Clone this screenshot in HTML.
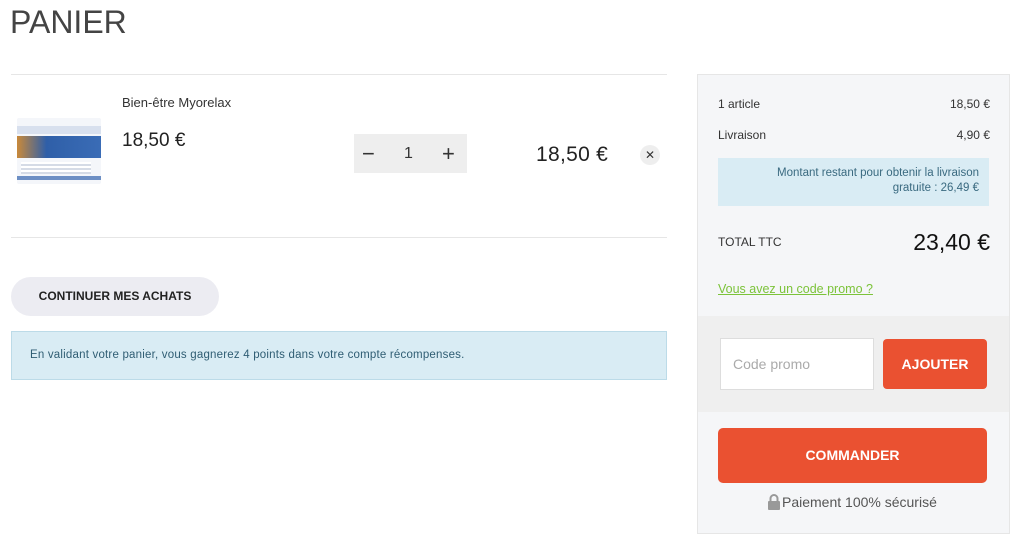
<!DOCTYPE html>
<html><head><meta charset="utf-8"><style>
*{box-sizing:border-box;margin:0;padding:0}
body{width:1022px;height:526px;background:#fff;font-family:"Liberation Sans",sans-serif;color:#222;position:relative;overflow:hidden}
.a{position:absolute}
</style></head><body>
<div class="a" style="left:10px;top:4px;font-size:32px;color:#444">PANIER</div>
<div class="a" style="left:11px;top:74px;width:656px;border-top:1px solid #e6e6e6"></div>
<div class="a" style="left:11px;top:237px;width:656px;border-top:1px solid #e6e6e6"></div>
<div class="a" style="left:17px;top:118px;width:84px;height:66px;background:#f4f6fa;border-radius:2px;overflow:hidden">
<div style="position:absolute;left:0;top:8px;width:84px;height:8px;background:#d8e0ee"></div>
<div style="position:absolute;left:0;top:18px;width:84px;height:22px;background:linear-gradient(90deg,#c9893a 0%,#2f5fa8 35%,#3a6cb6 100%)"></div>
<div style="position:absolute;left:4px;top:44px;width:70px;height:12px;background:repeating-linear-gradient(#fff 0 2px,#d5dbe6 2px 4px)"></div>
<div style="position:absolute;left:0;top:58px;width:84px;height:4px;background:#6d8fc4"></div>
</div>
<div class="a" style="left:122px;top:95px;font-size:13px;color:#333">Bien-être Myorelax</div>
<div class="a" style="left:122px;top:130px;font-size:19px;color:#222">18,50 €</div>
<div class="a" style="left:354px;top:134px;width:113px;height:39px;background:#eeeeee"></div>
<div class="a" style="left:362px;top:141px;font-size:22px;color:#333">−</div>
<div class="a" style="left:404px;top:145px;font-size:16px;color:#333">1</div>
<div class="a" style="left:442px;top:141px;font-size:22px;color:#333">+</div>
<div class="a" style="left:536px;top:143px;font-size:21px;color:#222;letter-spacing:0.3px">18,50 €</div>
<div class="a" style="left:640px;top:145px;width:20px;height:20px;border-radius:50%;background:#eee;font-size:12px;text-align:center;line-height:20px;color:#333">✕</div>
<div class="a" style="left:11px;top:277px;width:208px;height:39px;border-radius:20px;background:#ececf2;font-size:12px;font-weight:bold;text-align:center;line-height:39px;color:#222">CONTINUER MES ACHATS</div>
<div class="a" style="left:11px;top:331px;width:656px;height:49px;background:#d9ecf4;border:1px solid #bcdbe8;font-size:11.5px;color:#2f5d73;padding-left:18px;line-height:46px;letter-spacing:0.2px">En validant votre panier, vous gagnerez 4 points dans votre compte récompenses.</div>
<div class="a" style="left:697px;top:74px;width:313px;height:460px;background:#f5f6f8;border:1px solid #e6e6e6"></div>
<div class="a" style="left:718px;top:97px;font-size:12px;color:#333">1 article</div>
<div class="a" style="left:940px;top:97px;width:50px;text-align:right;font-size:12px;color:#333">18,50 €</div>
<div class="a" style="left:718px;top:128px;font-size:12px;color:#333">Livraison</div>
<div class="a" style="left:940px;top:128px;width:50px;text-align:right;font-size:12px;color:#333">4,90 €</div>
<div class="a" style="left:718px;top:158px;width:271px;height:48px;background:#d9ecf4;font-size:11.5px;color:#3a6a80;text-align:right;padding:8px 10px 0 0;line-height:15px">Montant restant pour obtenir la livraison<br>gratuite : 26,49 €</div>
<div class="a" style="left:718px;top:235px;font-size:12px;color:#333">TOTAL TTC</div>
<div class="a" style="left:880px;top:229px;width:110px;text-align:right;font-size:23px;color:#111">23,40 €</div>
<div class="a" style="left:718px;top:282px;font-size:12.5px;color:#7cc33a;text-decoration:underline">Vous avez un code promo ?</div>
<div class="a" style="left:698px;top:316px;width:311px;height:96px;background:#efefef"></div>
<div class="a" style="left:720px;top:338px;width:154px;height:52px;background:#fff;border:1px solid #ddd;font-size:14px;color:#aaa;padding-left:12px;line-height:50px">Code promo</div>
<div class="a" style="left:883px;top:339px;width:104px;height:50px;background:#ea5131;border-radius:4px;color:#fff;font-weight:bold;font-size:14px;text-align:center;line-height:50px">AJOUTER</div>
<div class="a" style="left:718px;top:428px;width:269px;height:55px;background:#ea5131;border-radius:5px;color:#fff;font-weight:bold;font-size:14px;text-align:center;line-height:55px">COMMANDER</div>
<div class="a" style="left:767px;top:494px;width:14px;height:16px"><svg width="14" height="16"><path d="M3.5 7V4.5a3.5 3.5 0 0 1 7 0V7" fill="none" stroke="#999" stroke-width="2"/><rect x="1" y="7" width="12" height="9" rx="1" fill="#999"/></svg></div>
<div class="a" style="left:782px;top:494px;font-size:14px;color:#555">Paiement 100% sécurisé</div>
</body></html>
